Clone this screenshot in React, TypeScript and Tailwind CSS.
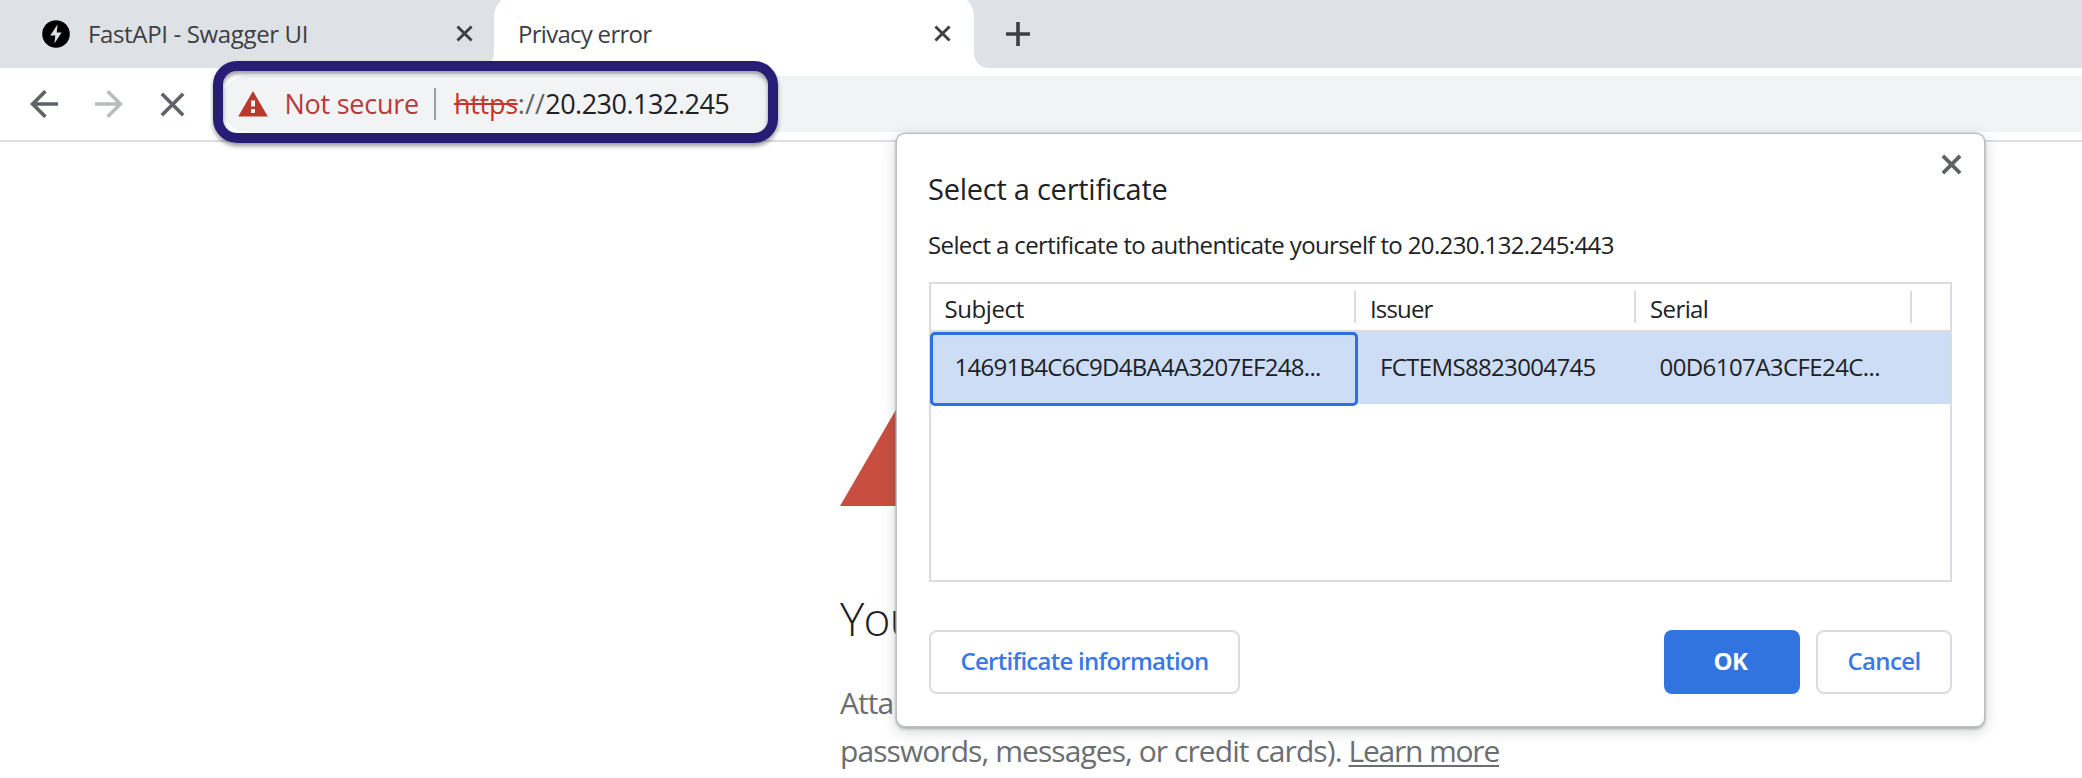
import type { ReactNode } from "react";

type CrossProps = { className: string; width: number; box?: number };

function Cross({ className, width, box = 20 }: CrossProps) {
  const a = width / 2;
  const b = box - a;
  return (
    <svg className={className} viewBox={`0 0 ${box} ${box}`} fill="none" stroke="currentColor" strokeWidth={width}>
      <path d={`M${a} ${a}L${b} ${b}M${b} ${a}L${a} ${b}`} />
    </svg>
  );
}

function BoltIcon() {
  return (
    <svg className="h-[28px] w-[28px] shrink-0" viewBox="0 0 28 28">
      <circle cx="14" cy="14" r="13.8" fill="#000" />
      <path d="M15.6 4.6L8.2 15.6h5.1l-.9 7.8 7.2-11h-4.9z" fill="#dee1e6" />
    </svg>
  );
}

function WarningIcon() {
  return (
    <svg className="h-[26px] w-[30px] shrink-0" viewBox="0 0 30 26">
      <path d="M15 0L29.8 25.5H.2z" fill="#b93a2c" />
      <path d="M13.1 9.4h3.9v6h-3.9zM13.1 18h3.9v4h-3.9z" fill="#f1f3f4" />
    </svg>
  );
}

function TabStrip() {
  return (
    <div className="flex h-[68px] w-full shrink-0 bg-[#dee1e6] text-[24px] text-[#3c4043]">
      <div className="flex w-[494px] items-center pl-[42px] pb-[1px]">
        <BoltIcon />
        <span className="ml-[18px] flex-1 tracking-[-0.35px]">FastAPI - Swagger UI</span>
        <Cross className="mr-[21px] h-[17px] w-[17px]" width={3.4} />
      </div>
      <div className="relative flex w-[480px] items-center pl-[24px] pb-[1px]">
        <svg className="absolute top-0 -left-[16px] h-[68px] w-[512px]" viewBox="0 0 512 68">
          <path d="M0 68C10 68 16 62 16 52V16C16 10 19 4 24 0H489C493 4 496 10 496 16V52C496 62 502 68 512 68z" fill="#fff" />
        </svg>
        <span className="relative flex-1 tracking-[-0.72px]">Privacy error</span>
        <Cross className="relative mr-[23.5px] h-[17px] w-[17px]" width={3.4} />
      </div>
      <div className="flex items-center pl-[32px]">
        <svg className="h-[24px] w-[24px] text-[#3c4043]" viewBox="0 0 24 24" stroke="currentColor" strokeWidth="3.6">
          <path d="M12 0V24M0 12H24" />
        </svg>
      </div>
    </div>
  );
}

function Arrow({ className }: { className: string }) {
  return (
    <svg className={className} viewBox="0 0 28 28" fill="none" stroke="currentColor" strokeWidth="3.6">
      <path d="M28 14H3M15.4 1.2L2.6 14L15.4 26.8" />
    </svg>
  );
}

function Toolbar() {
  return (
    <div className="flex h-[74px] shrink-0 items-center border-b-2 border-[#dcdee1] bg-white">
      <Arrow className="ml-[30px] h-[28px] w-[28px] text-[#5f6368]" />
      <Arrow className="ml-[37px] h-[28px] w-[28px] rotate-180 text-[#b9bcbf]" />
      <Cross className="ml-[37px] h-[25px] w-[25px] text-[#5f6368]" width={2.9} />
      <div className="ml-[35px] flex h-[56px] flex-1 items-center rounded-l-[28px] bg-[#f1f3f4] pl-[17.5px] text-[27px]">
        <WarningIcon />
        <span className="ml-[17px] w-[149px] whitespace-nowrap pt-px tracking-[-0.25px] text-[#b93a3a]">Not secure</span>
        <span className="h-[32px] w-[2px] bg-[#9aa0a6]" />
        <span className="ml-[18.5px] whitespace-nowrap pt-px">
          <span className="tracking-[-0.3px] text-[#c5372c] line-through decoration-2">https</span>
          <span className="tracking-[0.2px] text-[#5f6368]">://</span>
          <span className="tracking-[-0.5px] text-[#202124]">20.230.132.245</span>
        </span>
      </div>
    </div>
  );
}

function DialogButton({ className, children }: { className: string; children: ReactNode }) {
  return (
    <button className={`flex h-[64px] items-center justify-center rounded-[8px] pb-[2px] text-[24px] whitespace-nowrap ${className}`}>
      {children}
    </button>
  );
}

function CertificateDialog() {
  return (
    <div className="absolute top-[134px] left-[897px] flex h-[592px] w-[1087px] flex-col rounded-[8px] bg-white px-[32px] pt-[35px] text-[#202124] shadow-[0_0_0_1.5px_#bcbfbf,0_2px_3px_1px_rgba(60,64,67,0.35),0_4px_14px_2px_rgba(60,64,67,0.2)]">
      <Cross className="absolute top-[20px] right-[22px] h-[21px] w-[21px] text-[#5f6368]" width={3.6} />
      <h2 className="-ml-px text-[29px] leading-[40px] tracking-[-0.25px]">Select a certificate</h2>
      <p className="mt-[20px] -ml-px text-[24px] leading-[32px] tracking-[-0.63px] whitespace-nowrap">
        Select a certificate to authenticate yourself to 20.230.132.245:443
      </p>
      <div className="mt-[21px] flex h-[300px] w-[1023px] flex-col border-2 border-[#dadce0] text-[24px] whitespace-nowrap">
        <div className="flex h-[48px] shrink-0 items-center border-b-2 border-[#dadce0]">
          <div className="flex h-[32px] w-[425px] items-center border-r-2 border-[#dadce0] pl-[13.5px] pt-[4px] tracking-[-0.4px]">Subject</div>
          <div className="flex h-[32px] w-[280px] items-center border-r-2 border-[#dadce0] pl-[14px] pt-[4px] tracking-[-0.85px]">Issuer</div>
          <div className="flex h-[32px] w-[276px] items-center border-r-2 border-[#dadce0] pl-[14px] pt-[4px] tracking-[-0.6px]">Serial</div>
        </div>
        <div className="flex h-[72px] shrink-0 bg-[#cdddf6]">
          <div className="-ml-px flex h-[74px] w-[428px] items-center rounded-[5px] border-[3px] border-[#2b6fe2] bg-[#cdddf6] pb-[4px] pl-[21.5px] tracking-[-0.72px]">
            14691B4C6C9D4BA4A3207EF248...
          </div>
          <div className="flex w-[279px] items-center pb-[2px] pl-[22px] tracking-[-0.65px]">FCTEMS8823004745</div>
          <div className="flex items-center pb-[2px] pl-[22.5px] tracking-[-0.58px]">00D6107A3CFE24C...</div>
        </div>
      </div>
      <div className="mt-[48px] flex w-[1023px]">
        <DialogButton className="w-[311px] border-2 border-[#dadce0] font-semibold tracking-[-0.74px] text-[#3b78e7]">
          Certificate information
        </DialogButton>
        <DialogButton className="ml-auto w-[136px] bg-[#3174e0] pr-[3px] font-bold tracking-[-0.5px] text-white">OK</DialogButton>
        <DialogButton className="ml-[16px] w-[136px] border-2 border-[#dadce0] font-semibold tracking-[-0.6px] text-[#3b78e7]">
          Cancel
        </DialogButton>
      </div>
    </div>
  );
}

export default function App() {
  return (
    <div className="relative flex h-[778px] w-[2082px] flex-col overflow-hidden bg-white font-['Open_Sans',sans-serif]">
      <TabStrip />
      <Toolbar />
      <main className="pt-[240px] pl-[840px]">
        <svg className="h-[124px] w-[144px]" viewBox="0 0 144 124">
          <path d="M72 0L144 124H0z" fill="#c84f40" />
        </svg>
        <h1 className="mt-[82px] text-[46px] leading-[60px] font-[350] tracking-[-0.8px] text-[#202124]">You</h1>
        <p className="mt-[31px] text-[30px] leading-[48px] tracking-[-0.93px] whitespace-nowrap text-[#6b6e70]">
          Atta
          <br />
          passwords, messages, or credit cards).{" "}
          <span className="tracking-[-1.2px] underline decoration-2 underline-offset-[3px]">Learn more</span>
        </p>
      </main>
      <CertificateDialog />
      <div className="absolute top-[61px] left-[213px] h-[82px] w-[565px] rounded-[24px] border-[10px] border-[#281c74] shadow-[0_3px_4px_rgba(0,0,0,0.4),inset_0_3px_4px_rgba(0,0,0,0.4)]" />
    </div>
  );
}
